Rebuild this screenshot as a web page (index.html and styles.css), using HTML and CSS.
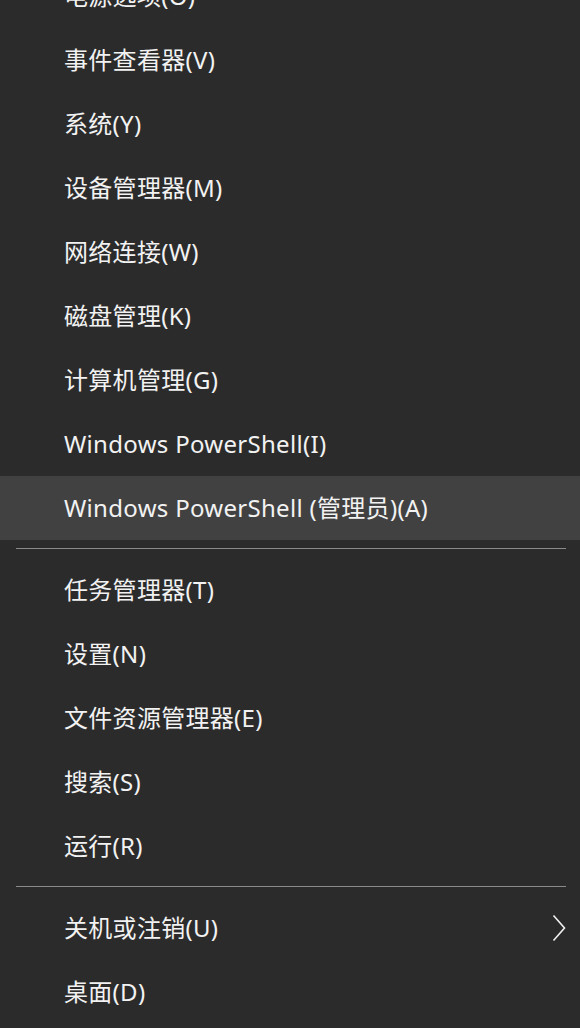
FILE: index.html
```html
<!DOCTYPE html>
<html lang="zh-CN">
<head>
    <meta charset="UTF-8">
    <meta name="viewport" content="width=device-width, initial-scale=1.0">
    <title>Win+X</title>
    <link rel="stylesheet" href="styles.css">
</head>
<body>
<div class="menu">
    <ul class="group first">
        <li>电源选项(O)</li>
        <li>事件查看器(V)</li>
        <li>系统(Y)</li>
        <li>设备管理器(M)</li>
        <li>网络连接(W)</li>
        <li>磁盘管理(K)</li>
        <li>计算机管理(G)</li>
        <li>Windows PowerShell(I)</li>
        <li class="active">Windows PowerShell (管理员)(A)</li>
    </ul>
    <div class="sep"></div>
    <ul class="group">
        <li>任务管理器(T)</li>
        <li>设置(N)</li>
        <li>文件资源管理器(E)</li>
        <li>搜索(S)</li>
        <li>运行(R)</li>
    </ul>
    <div class="sep"></div>
    <ul class="group">
        <li class="sub">关机或注销(U)
            <svg class="arrow" width="14" height="28" viewBox="0 0 14 28"><path d="M1.5 1.5 L12.5 14 L1.5 26.5" fill="none" stroke="#f2f2f2" stroke-width="1.6"/></svg>
        </li>
        <li>桌面(D)</li>
    </ul>
</div>
</body>
</html>
```

FILE: styles.css
```css
body,ul,li{
    margin:0;
    padding:0;
    list-style:none;
}
body{
    background:#2b2b2b;
    height:1028px;
    overflow:hidden;
    font-family:"Noto Sans","Noto Sans CJK SC",sans-serif;
}
.menu{
    width:580px;
}
.group.first{
    margin-top:-36px;
}
.group li{
    height:64px;
    display:flex;
    align-items:center;
    padding-left:64px;
    color:#f2f2f2;
    font-size:24px;
    line-height:30px;
    letter-spacing:0.3px;
}
.group li.active{
    background:#414141;
}
.group li.sub{
    justify-content:space-between;
    padding-right:14px;
}
.sep{
    height:1px;
    margin:8px 14px 9px 16px;
    background:#8a8a8a;
}
```
